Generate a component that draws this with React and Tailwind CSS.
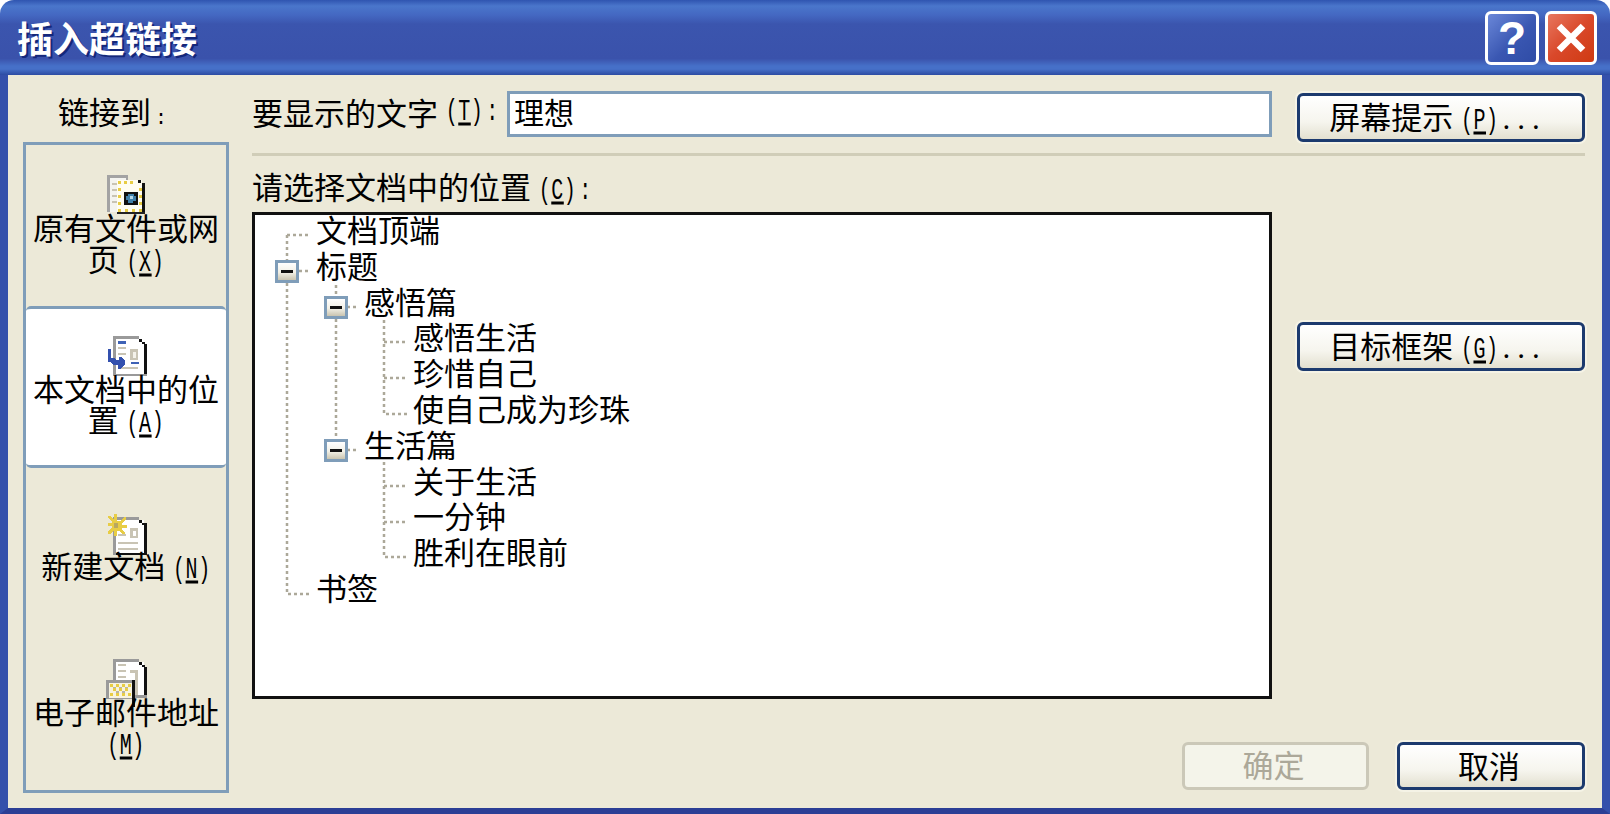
import React from "react";

const xpButton =
  "flex items-center justify-center h-[49px] pt-[2px] rounded-[6px] border-[3px] border-[#1c3a6e] bg-[linear-gradient(180deg,#ffffff_0%,#f6f5ee_60%,#e3e0d0_100%)] text-[31px] leading-none text-black shadow-[0_0_0_2px_#f5f3e6]";

// access key in the narrow bitmap style of the original dialog
const Key = ({ k, colon }) => (
  <span className="inline-block text-[20px] leading-[20px] tracking-[0.5px] font-['Liberation_Mono',monospace] scale-y-150 -translate-y-[3px]">
    (<u className="underline-offset-[2px]">{k}</u>){colon && <span className="ml-[3px]">:</span>}
  </span>
);

const Dots = () => <span className="tracking-[7px] ml-[4px] font-['Liberation_Serif',serif]">...</span>;

const IconExisting = () => (
  <svg width="52" height="40" viewBox="100 173 52 40" shapeRendering="crispEdges" className="overflow-visible">
    <rect x="107" y="173" width="21" height="37" fill="#a3a3a3" />
    <rect x="110" y="176" width="16" height="34" fill="#f4f4f0" />
    <path d="M112 181h5v2h-5zM112 187h5v2h-5zM112 193h5v2h-5zM112 199h5v2h-5z" fill="#c9c4b4" />
    <rect x="117" y="178" width="25" height="34" fill="#fffdf2" />
    <path d="M142 181h3v31h-3zM138 178h3v3h-3z" fill="#111" />
    <rect x="117" y="210" width="28" height="2" fill="#222" />
    <path d="M118 179h3v3h-3zM124 179h3v3h-3zM130 179h3v3h-3zM118 186h3v3h-3zM118 193h3v3h-3zM118 200h3v3h-3zM118 207h3v3h-3zM125 207h3v3h-3zM132 207h3v3h-3zM139 207h3v3h-3zM139 186h3v3h-3zM139 193h3v3h-3zM139 200h3v3h-3z" fill="#e8cd45" />
    <rect x="124" y="190" width="14" height="13" fill="#111" />
    <path d="M128 192h6v2h2v5h-3v2h-5v-3h-2v-4h2z" fill="#3f7fa8" />
    <path d="M130 194h3v3h-3z" fill="#b8d8e8" />
  </svg>
);

const IconPlace = () => (
  <svg width="52" height="40" viewBox="100 334 52 40" shapeRendering="crispEdges" className="overflow-visible">
    <rect x="113" y="334" width="26" height="40" fill="#9a9a9a" />
    <rect x="116" y="337" width="28" height="35" fill="#fff" />
    <path d="M139 337h3v3h3v2h-3v-2h-3zM144 342h3v30h-3z" fill="#111" />
    <rect x="116" y="372" width="31" height="2" fill="#999" />
    <rect x="118" y="339" width="8" height="3" fill="#3f62b5" />
    <path d="M118 345h8v2h-8zM118 351h8v2h-8zM130 347h8v11h-8zM118 365h20v2h-20z" fill="#c9c4b4" />
    <rect x="133" y="350" width="3" height="6" fill="#f4f2ea" />
    <rect x="131" y="360" width="8" height="2" fill="#3f62b5" />
    <path d="M108 347h3v9h3l2 2h3v-3h2l4 4v3l-5 5h-2v-4h-5l-3-3h-2z" fill="#3350ae" />
  </svg>
);

const IconNew = () => (
  <svg width="52" height="40" viewBox="100 510 52 40" shapeRendering="crispEdges" className="overflow-visible">
    <rect x="113" y="514" width="26" height="38" fill="#9a9a9a" />
    <rect x="116" y="517" width="28" height="33" fill="#fff" />
    <path d="M139 517h3v3h3v2h-3v-2h-3zM144 520h3v32h-3zM116 550h31v2h-31z" fill="#111" />
    <path d="M130 525h8v10h-8zM118 539h20v2h-20zM118 545h20v2h-20zM118 531h8v2h-8z" fill="#c9c4b4" />
    <rect x="133" y="528" width="3" height="5" fill="#fff" />
    <path d="M114 511h3v7h3l4-4h2v2l-4 4v2h5v3h-5v2l3 3v1h-3l-3-3h-2v5h-3v-5l-4 3h-2v-3l4-3v-2h-4v-3h4v-2l-4-3v-2h2l4 3z" fill="#e8cd45" />
    <path d="M114 520h4v5h-4z" fill="#b8a860" />
  </svg>
);

const IconMail = () => (
  <svg width="52" height="40" viewBox="100 657 52 40" shapeRendering="crispEdges" className="overflow-visible">
    <rect x="113" y="657" width="26" height="38" fill="#9a9a9a" />
    <rect x="116" y="660" width="28" height="35" fill="#fff" />
    <path d="M139 660h3v3h3v2h-3v-2h-3zM144 665h3v28h-3z" fill="#111" />
    <rect x="134" y="693" width="13" height="3" fill="#999" />
    <path d="M118 662h8v2h-8zM118 668h8v2h-8zM118 674h8v2h-8zM130 668h8v3h-8zM135 671h3v22h-3z" fill="#c9c4b4" />
    <rect x="106" y="678" width="26" height="19" fill="#9a9a9a" />
    <rect x="109" y="681" width="23" height="15" fill="#f7f3df" />
    <path d="M110 682h3v3h-3zM116 682h3v3h-3zM122 682h3v3h-3zM128 682h3v3h-3zM113 686h3v3h-3zM119 686h3v3h-3zM125 686h3v3h-3zM110 691h3v3h-3zM116 691h3v3h-3zM122 691h3v3h-3zM128 691h3v3h-3z" fill="#e8cd45" />
    <path d="M113 685h3v1h-3zM119 685h3v1h-3zM125 685h3v1h-3zM116 689h3v2h-3zM122 689h3v2h-3z" fill="#b9b5a4" />
    <rect x="132" y="678" width="3" height="27" fill="#111" />
  </svg>
);

const LinkItem = ({ icon, active, children }) => (
  <div
    className={`h-[161.25px] flex flex-col items-center justify-center ${
      active ? "bg-white border-y-[3px] border-[#7f9db9] rounded-[5px]" : ""
    }`}
  >
    {icon}
    <div className="w-[192px] text-center text-[31px] leading-[30.5px] text-black">{children}</div>
  </div>
);

const Expander = ({ x, y }) => (
  <g shapeRendering="crispEdges">
    <rect x={x} y={y} width="24" height="23" fill="#7f9db9" />
    <rect x={x + 3} y={y + 3} width="18" height="17" fill="url(#exp)" />
    <rect x={x + 6} y={y + 10} width="12" height="3" fill="#111" />
  </g>
);

const TreeLines = () => (
  <svg className="absolute inset-0 w-full h-full" viewBox="255 215 1014 481" preserveAspectRatio="none">
    <defs>
      <linearGradient id="exp" x1="0" y1="0" x2="0" y2="1">
        <stop offset="0%" stopColor="#ffffff" />
        <stop offset="55%" stopColor="#f2f0e6" />
        <stop offset="100%" stopColor="#c9c4b0" />
      </linearGradient>
    </defs>
    <g stroke="#aca899" strokeWidth="2.5" strokeDasharray="3 3" fill="none">
      <path d="M287 235H310M287 235V260M287 283V594H310M299 271H310" />
      <path d="M336 285V296M336 319V439M347 307H358M347 450H358" />
      <path d="M384 320V414H407M384 342H407M384 378H407" />
      <path d="M384 462V557H407M384 486H407M384 522H407" />
    </g>
    <Expander x={275} y={260} />
    <Expander x={324} y={296} />
    <Expander x={324} y={439} />
  </svg>
);

const tree = [
  [0, "文档顶端"],
  [0, "标题"],
  [1, "感悟篇"],
  [2, "感悟生活"],
  [2, "珍惜自己"],
  [2, "使自己成为珍珠"],
  [1, "生活篇"],
  [2, "关于生活"],
  [2, "一分钟"],
  [2, "胜利在眼前"],
  [0, "书签"],
];

const indent = ["pl-[61px]", "pl-[109px]", "pl-[158px]"];

export default function App() {
  return (
    <div className="w-[1610px] h-[814px] flex flex-col bg-white overflow-hidden font-['Liberation_Serif','Noto_Sans_CJK_SC',sans-serif]">
      {/* title bar */}
      <div className="h-[75px] shrink-0 flex items-center justify-between rounded-t-[14px] pl-[17px] pr-[13px] bg-[linear-gradient(180deg,#2f55b0_0%,#4a76cb_8%,#4468c2_20%,#3b55ae_32%,#3a52ab_78%,#4670c8_88%,#4670c8_92%,#2c4ba2_100%)]">
        <div className="pt-[7px] text-[36px] font-bold leading-none text-white [text-shadow:2px_2px_0_#14277a]">插入超链接</div>
        <div className="flex gap-[6px]">
          <div className="w-[54px] h-[54px] flex items-center justify-center rounded-[6px] border-[3px] border-white bg-[linear-gradient(135deg,#6a87d8_0%,#3a57b2_55%,#2f4ca6_100%)] text-[46px] font-bold leading-none text-white font-['Liberation_Sans',sans-serif]">
            ?
          </div>
          <div className="w-[52px] h-[54px] flex items-center justify-center rounded-[6px] border-[3px] border-white bg-[linear-gradient(135deg,#e8775f_0%,#d9482a_50%,#cf3a12_100%)]">
            <svg width="30" height="30" viewBox="0 0 30 30">
              <path d="M3 3L27 27M27 3L3 27" stroke="#fff" strokeWidth="6.5" />
            </svg>
          </div>
        </div>
      </div>

      {/* client area */}
      <div className="flex-1 flex border-x-[8px] border-b-[6px] border-x-[#3450ab] border-b-[#2b3e95] bg-[#ece9d8] pl-[15px] pr-[18px]">
        {/* link to column */}
        <div className="w-[206px] shrink-0 pt-[23px]">
          <div className="h-[31px] pl-[35px] text-[31px] leading-[31px] text-black">
            链接到<span className="ml-[4px] font-['Liberation_Mono',monospace] text-[20px]">:</span>
          </div>
          <div className="mt-[13px] h-[651px] border-[3px] border-[#7f9db9]">
            <LinkItem icon={<IconExisting />}>原有文件或网页 <Key k="X" /></LinkItem>
            <LinkItem active icon={<IconPlace />}>本文档中的位置 <Key k="A" /></LinkItem>
            <LinkItem icon={<IconNew />}>新建文档 <Key k="N" /></LinkItem>
            <LinkItem icon={<IconMail />}>电子邮件地址 <Key k="M" /></LinkItem>
          </div>
        </div>

        {/* main column */}
        <div className="flex-1 pl-[23px] pt-[16px]">
          <div className="flex items-start">
            <div className="w-[255px] h-[46px] pt-[2px] flex items-center text-[31px] text-black whitespace-pre">
              要显示的文字 <Key k="T" colon />
            </div>
            <div className="w-[765px] h-[46px] flex items-center border-[3px] border-[#7f9db9] bg-white pl-[4px] pb-[2px] text-[30px] text-black">
              理想
            </div>
            <div className={`${xpButton} w-[288px] ml-[25px] mt-[2px] pr-[6px]`}>
              <span>屏幕提示 <Key k="P" /><Dots /></span>
            </div>
          </div>

          <div className="mt-[11px] h-[3px] bg-[#d0cdb8]" />

          <div className="flex items-start">
            <div className="w-[1020px] shrink-0">
              <div className="mt-[17px] h-[31px] text-[31px] leading-[31px] text-black">
                请选择文档中的位置 <Key k="C" colon />
              </div>
              <div className="relative mt-[8px] h-[487px] border-[3px] border-[#111] bg-white">
                <TreeLines />
                <div className="relative -mt-[1px]">
                  {tree.map(([level, label], i) => (
                    <div
                      key={i}
                      className={`h-[35.8px] leading-[35.8px] text-[31px] text-black ${indent[level]}`}
                    >
                      {label}
                    </div>
                  ))}
                </div>
              </div>
            </div>
            <div className={`${xpButton} w-[288px] ml-[25px] mt-[166px] pr-[6px]`}>
              <span>目标框架 <Key k="G" /><Dots /></span>
            </div>
          </div>

          <div className="mt-[43px] flex justify-end gap-[28px]">
            <div className="flex items-center justify-center w-[187px] h-[48px] pt-[2px] pr-[4px] rounded-[6px] border-[3px] border-[#cbc8b8] bg-[#f4f4ea] text-[31px] text-[#aca899]">
              确定
            </div>
            <div className={`${xpButton} w-[188px] !h-[48px] pr-[4px]`}>取消</div>
          </div>
        </div>
      </div>
    </div>
  );
}
